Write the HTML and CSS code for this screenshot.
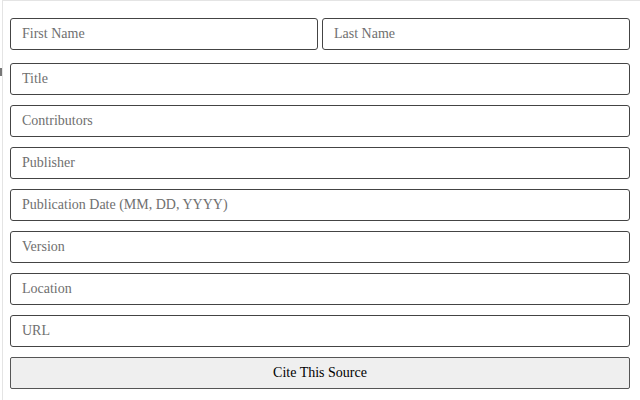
FILE: index.html
```html
<!DOCTYPE html>
<html lang="en">
<head>
  <meta charset="UTF-8" />
  <meta name="viewport" content="width=device-width, initial-scale=1.0" />
  <title>Cite This Source</title>
  <link rel="stylesheet" href="styles.css">
</head>
<body>
  <div class="frame">
    <span class="edge-mark"></span>
    <form id="cite-form" class="cite-form">
      <div class="name-row">
        <input type="text" id="firstName" placeholder="First Name" />
        <input type="text" id="lastName" placeholder="Last Name" />
      </div>
      <input type="text" id="title" placeholder="Title" />
      <input type="text" id="contributors" placeholder="Contributors" />
      <input type="text" id="publisher" placeholder="Publisher" />
      <input type="text" id="pubDate" placeholder="Publication Date (MM, DD, YYYY)" />
      <input type="text" id="version" placeholder="Version" />
      <input type="text" id="location" placeholder="Location" />
      <input type="text" id="url" placeholder="URL" />
      <button type="submit">Cite This Source</button>
    </form>
  </div>
</body>
</html>
```

FILE: styles.css
```css
/* Base & Layout */
* { box-sizing: border-box; }
body {
  margin: 0;
  padding: 0;
  background: #fff;
  font-family: 'Liberation Serif', 'Times New Roman', serif;
}
.frame {
  position: relative;
  height: 400px;
  margin-left: 2px;
  border-top: 1px solid #e4e4e4;
  border-left: 1px solid #e4e4e4;
  padding: 17px 10px 0 7px;
}
.edge-mark {
  position: absolute;
  left: -3px;
  top: 67px;
  width: 2px;
  height: 8px;
  background: #777;
}
.cite-form {
  display: flex;
  flex-direction: column;
  gap: 10px;
}
.name-row {
  display: flex;
  gap: 4px;
  margin-bottom: 3px;
}
.name-row input { flex: 1; min-width: 0; }
.cite-form input {
  height: 32px;
  padding: 0 11px;
  border: 1px solid #444;
  border-radius: 3px;
  font-family: inherit;
  font-size: 14px;
  color: #222;
  background: #fff;
}
.cite-form input::placeholder { color: #6f6f6f; }
.cite-form button {
  height: 32px;
  border: 1px solid #555;
  border-radius: 2px;
  background: #efefef;
  font-family: inherit;
  font-size: 14px;
  color: #000;
  cursor: pointer;
}
```
